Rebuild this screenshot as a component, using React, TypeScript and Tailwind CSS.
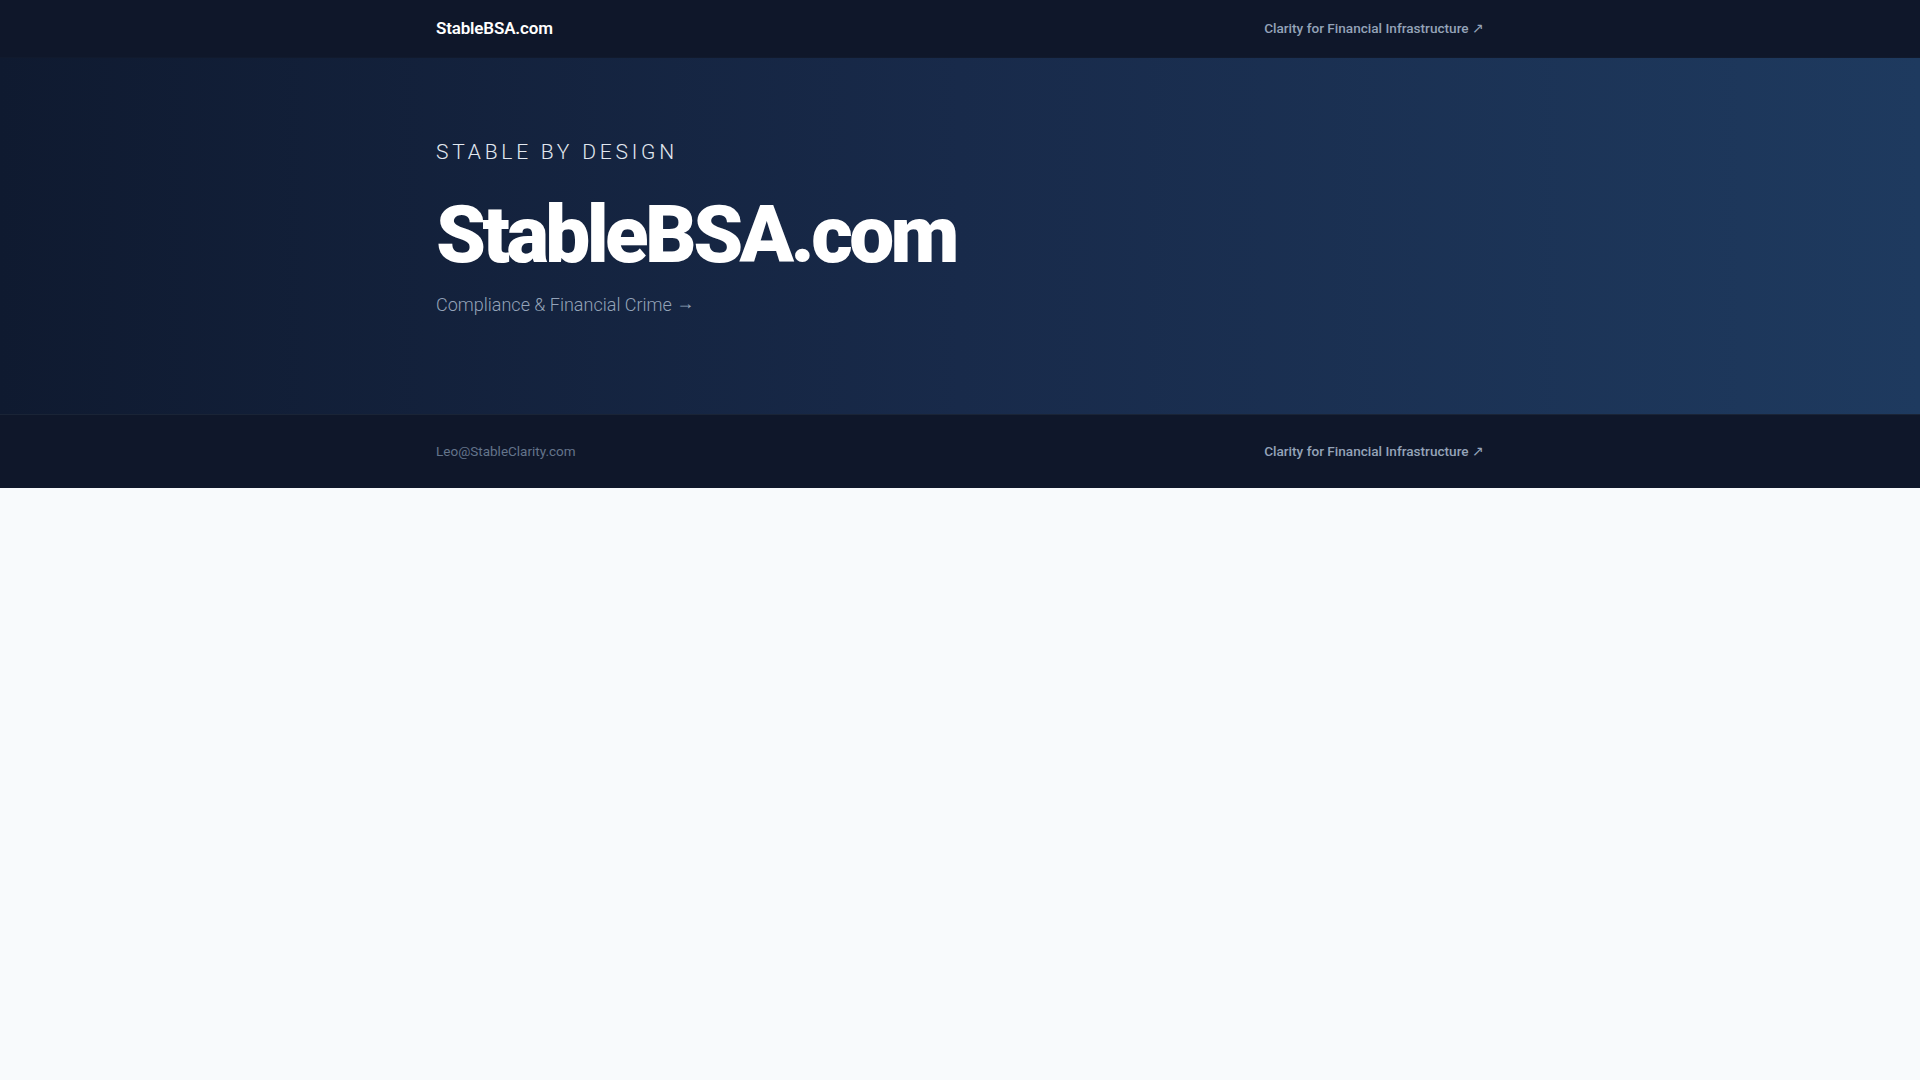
const font = { fontFamily: 'Roboto, "Liberation Sans", sans-serif' };

export default function App() {
  return (
    <div className="min-h-screen bg-[#f8fafc]" style={font}>
      <header className="bg-[#0f172a] border-b border-[#111a2d]">
        <div className="max-w-[1096px] mx-auto px-6 h-[57px] flex items-center justify-between">
          <span className="text-white text-[17px] font-semibold tracking-[-0.01em]">StableBSA.com</span>
          <a className="text-[13.6px] font-medium text-[#94a3b8]">Clarity for Financial Infrastructure ↗</a>
        </div>
      </header>

      <section className="bg-gradient-to-r from-[#0f1a30] via-[#182a4a] to-[#1e3a5f]">
        <div className="max-w-[1096px] mx-auto px-6 pt-20 pb-[95px]">
          <p className="text-[21px] font-light leading-7 tracking-[0.18em] text-[#e2e8f0]">STABLE BY DESIGN</p>
          <h1 className="mt-[29px] text-[80px] leading-none font-black tracking-[-0.045em] text-white">StableBSA.com</h1>
          <p className="mt-[16px] text-[18px] leading-7 font-light text-[#94a3b8]">
            Compliance &amp; Financial Crime <span className="relative -top-[2px]">→</span>
          </p>
        </div>
      </section>

      <footer className="bg-[#0f172a] border-t border-[#1a2436]">
        <div className="max-w-[1096px] mx-auto px-6 h-[73px] flex items-center justify-between">
          <span className="text-[13.5px] text-[#64748b]">Leo@StableClarity.com</span>
          <a className="text-[13.6px] font-medium text-[#94a3b8]">Clarity for Financial Infrastructure ↗</a>
        </div>
      </footer>
    </div>
  );
}
